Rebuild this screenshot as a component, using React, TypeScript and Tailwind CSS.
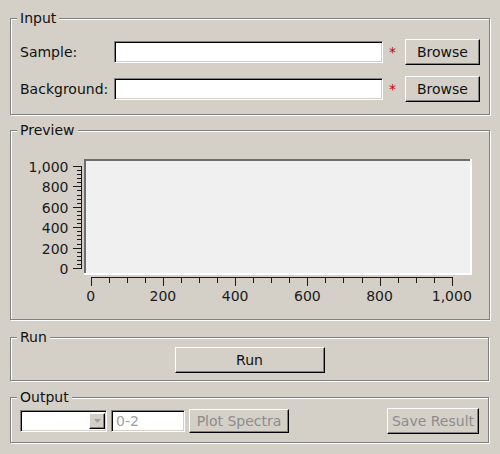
import React from "react";

// classic Tk / Win95 bevels
const sunken =
  "border border-t-[#808080] border-l-[#808080] border-b-white border-r-white shadow-[inset_1px_1px_0_#000,inset_-1px_-1px_0_#d4d0c8]";
const raised =
  "border border-t-white border-l-white border-b-black border-r-black shadow-[inset_-1px_-1px_0_#808080]";
const groove = "border border-[#808080] shadow-[inset_1px_1px_0_#fff,1px_1px_0_#fff]";

function Group({
  title,
  className,
  children,
}: {
  title: string;
  className?: string;
  children: React.ReactNode;
}) {
  return (
    <fieldset className={`ml-[10px] w-[479px] px-[9px] ${groove} ${className ?? ""}`}>
      <legend className="-ml-[3px] bg-[#d4d0c8] px-[3px] leading-[15px]">{title}</legend>
      {children}
    </fieldset>
  );
}

function FileRow({ label }: { label: string }) {
  return (
    <div className="flex items-center">
      <span className="w-[94px]">{label}</span>
      <input type="text" className={`h-[22px] w-[269px] bg-white outline-none ${sunken}`} />
      <span className="ml-[6px] w-[16px] text-[#cc0000]">*</span>
      <button className={`h-[26px] w-[75px] bg-[#d4d0c8] ${raised}`}>Browse</button>
    </div>
  );
}

function Chart() {
  // svg origin sits at page (20,150)
  const yOf = (v: number) => 118 - v * 0.102;
  const xOf = (v: number) => 70.7 + v * 0.3611;
  const yMajor = [0, 200, 400, 600, 800, 1000];
  const yMinor: number[] = [];
  for (let v = 0; v <= 1000; v += 40) if (v % 200 !== 0) yMinor.push(v);
  const xMinor: number[] = [];
  for (let v = 0; v <= 1000; v += 50) if (v % 200 !== 0) xMinor.push(v);
  const fmt = (v: number) => v.toLocaleString("en-US");

  return (
    <svg width="460" height="160" className="block" shapeRendering="crispEdges">
      {/* plot canvas */}
      <rect x="64" y="9" width="388" height="116" fill="#ffffff" />
      <rect x="64" y="9" width="386" height="114" fill="#6e6e6e" />
      <rect x="66" y="11" width="384" height="112" fill="#f0f0f0" />

      {/* y axis */}
      <line x1="61.5" y1={yOf(1000)} x2="61.5" y2={yOf(0) + 0.5} stroke="#1a1a1a" />
      {yMajor.map((v) => (
        <g key={v}>
          <line x1="53" y1={Math.round(yOf(v)) + 0.5} x2="62" y2={Math.round(yOf(v)) + 0.5} stroke="#1a1a1a" />
          <text
            x="48.5"
            y={Math.round(yOf(v)) + 5.5}
            textAnchor="end"
            fontFamily="DejaVu Sans, sans-serif"
            fontSize="14"
            fill="#1a1a1a"
          >
            {fmt(v)}
          </text>
        </g>
      ))}
      {yMinor.map((v) => (
        <line key={v} x1="57" y1={Math.round(yOf(v)) + 0.5} x2="62" y2={Math.round(yOf(v)) + 0.5} stroke="#1a1a1a" />
      ))}

      {/* x axis */}
      <line x1={Math.round(xOf(0))} y1="127.5" x2={Math.round(xOf(1000)) + 1} y2="127.5" stroke="#1a1a1a" />
      {yMajor.map((v) => (
        <g key={v}>
          <line x1={Math.round(xOf(v)) + 0.5} y1="127" x2={Math.round(xOf(v)) + 0.5} y2="136" stroke="#1a1a1a" />
          <text
            x={xOf(v)}
            y="150.5"
            textAnchor="middle"
            fontFamily="DejaVu Sans, sans-serif"
            fontSize="14"
            fill="#1a1a1a"
          >
            {fmt(v)}
          </text>
        </g>
      ))}
      {xMinor.map((v) => (
        <line key={v} x1={Math.round(xOf(v)) + 0.5} y1="127" x2={Math.round(xOf(v)) + 0.5} y2="133" stroke="#1a1a1a" />
      ))}
    </svg>
  );
}

export default function App() {
  return (
    <div className="h-[454px] w-[500px] overflow-hidden bg-[#d4d0c8] pt-[11px] font-['DejaVu_Sans',sans-serif] text-[14px] text-[#111]">
      <Group title="Input" className="h-[104px]">
        <div className="flex flex-col gap-[11px] pt-[13px]">
          <FileRow label="Sample:" />
          <FileRow label="Background:" />
        </div>
      </Group>

      <Group title="Preview" className="mt-[8px] h-[197px]">
        <div className="pt-[12px]">
          <Chart />
        </div>
      </Group>

      <Group title="Run" className="mt-[10px] h-[51px]">
        <div className="flex justify-center pt-[2px]">
          <button className={`h-[26px] w-[150px] bg-[#d4d0c8] ${raised}`}>Run</button>
        </div>
      </Group>

      <Group title="Output" className="mt-[9px] h-[53px]">
        <div className="flex items-center pt-[3px]">
          <div className={`flex h-[22px] w-[87px] items-center justify-end bg-white pr-[1px] ${sunken}`}>
            <div className={`flex h-[16px] w-[16px] items-center justify-center bg-[#d4d0c8] ${raised}`}>
              <svg width="7" height="4" viewBox="0 0 7 4">
                <path d="M0 0h7L3.5 4z" fill="#a0a0a0" />
              </svg>
            </div>
          </div>
          <input
            type="text"
            value="0-2"
            readOnly
            className={`ml-[4px] h-[22px] w-[74px] bg-white px-[4px] text-[#a0a0a0] outline-none ${sunken}`}
          />
          <button className={`ml-[4px] h-[24px] w-[100px] bg-[#d4d0c8] text-[#8c8c8c] ${raised}`}>
            Plot Spectra
          </button>
          <button className={`ml-auto h-[26px] w-[92px] bg-[#d4d0c8] text-[#8c8c8c] ${raised}`}>
            Save Result
          </button>
        </div>
      </Group>
    </div>
  );
}
